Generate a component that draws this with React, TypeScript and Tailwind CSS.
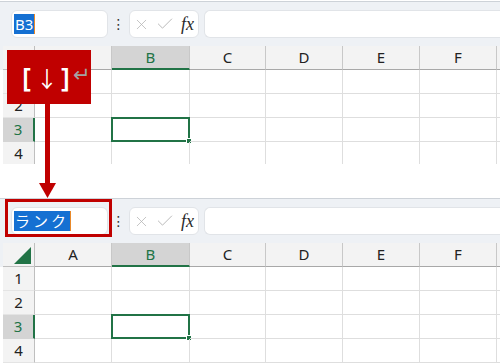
import { X, Check } from 'lucide-react'

const cols = [
  { label: 'A', w: 'w-[77px]' },
  { label: 'B', w: 'w-[78px]' },
  { label: 'C', w: 'w-[76px]' },
  { label: 'D', w: 'w-[77px]' },
  { label: 'E', w: 'w-[77px]' },
  { label: 'F', w: 'w-[77px]' },
]

const rows = [1, 2, 3, 4]

const NameBox = ({ text, jp }: { text: string; jp?: boolean }) => (
  <div className="w-[97px] h-[28px] bg-white rounded-md border border-[#e1e4e8] flex items-center pl-[2px]">
    <span
      className={
        'h-[20px] bg-[#1570d2] text-white leading-[20px] px-[1px] ' +
        (jp ? "text-[15px] tracking-[3px] font-['Noto_Sans_CJK_JP',sans-serif]" : "text-[15px] font-['Noto_Sans',sans-serif]")
      }
    >
      {text}
    </span>
    <span className="w-[1px] h-[20px] bg-[#e8892a]" />
  </div>
)

const Toolbar = ({ text, jp }: { text: string; jp?: boolean }) => (
  <div className="h-[45px] bg-[#eef1f5] border-t border-[#cdd2d8] flex items-start pt-[8px] pl-[11px]">
    <NameBox text={text} jp={jp} />
    <div className="w-[21px] h-[28px] flex items-center justify-center text-[#333] text-[14px] font-['DejaVu_Sans',sans-serif]">
      ⋮
    </div>
    <div className="w-[70px] h-[28px] bg-white rounded-md border border-[#e1e4e8] flex items-center pl-[3px] gap-[5px]">
      <X size={17} strokeWidth={1.1} className="text-[#b4b4b4]" />
      <Check size={20} strokeWidth={1.1} className="text-[#b4b4b4]" />
      <span className="text-[18px] italic text-[#2a2a2a] font-['Liberation_Serif',serif] ml-[1px]">fx</span>
    </div>
    <div className="ml-[5px] flex-1 h-[28px] bg-white rounded-l-md border border-r-0 border-[#e1e4e8]" />
  </div>
)

const Sheet = () => (
  <div className="font-['Noto_Sans',sans-serif]">
    <div className="flex h-[24px] bg-[#eef1f5]">
      <div className="w-[3px]" />
      <div className="w-[32px] bg-[#f3f3f3] border-r border-b border-[#bfbfbf] flex items-end justify-end pr-[3px] pb-[2px]">
        <svg width="17" height="17" viewBox="0 0 17 17">
          <polygon points="17,0 17,17 0,17" fill="#217346" />
        </svg>
      </div>
      {cols.map((c) => (
        <div
          key={c.label}
          className={
            c.w +
            ' flex items-center justify-center text-[15px] border-r ' +
            (c.label === 'B'
              ? 'bg-[#d4d4d4] text-[#217346] border-[#c8c8c8] border-b-2 border-b-[#217346]'
              : 'bg-[#f3f3f3] text-[#222] border-[#c8c8c8] border-b border-b-[#a8a8a8]')
          }
        >
          {c.label}
        </div>
      ))}
      <div className="flex-1 bg-[#f3f3f3] border-b border-[#a8a8a8]" />
    </div>
    {rows.map((r) => (
      <div key={r} className="flex h-[24px]">
        <div className="w-[3px]" />
        <div
          className={
            'w-[32px] flex items-center justify-center text-[15px] border-b ' +
            (r === 3
              ? 'bg-[#d4d4d4] text-[#217346] border-r-2 border-r-[#217346] border-b-[#d4d4d4]'
              : 'bg-[#f3f3f3] text-[#222] border-r border-r-[#bfbfbf] border-b-[#e4e4e4]')
          }
        >
          {r}
        </div>
        {cols.map((c) => (
          <div key={c.label} className={c.w + ' relative border-r border-b border-[#dedede]'}>
            {r === 3 && c.label === 'B' && (
              <div className="absolute -left-[1px] -top-[1px] -right-[1px] -bottom-[1px] border-2 border-[#217346]">
                <div className="absolute -right-[4px] -bottom-[4px] w-[6px] h-[6px] bg-[#217346] border border-white" />
              </div>
            )}
          </div>
        ))}
        <div className="flex-1 border-b border-[#dedede]" />
      </div>
    ))}
  </div>
)

export default function App() {
  return (
    <div className="relative w-[500px] h-[364px] bg-white overflow-hidden">
      <div className="mt-[1px] h-[163px] overflow-hidden">
        <Toolbar text="B3" />
        <Sheet />
      </div>
      <div className="h-[34px]" />
      <div className="relative h-[166px] overflow-hidden">
        <Toolbar text="ランク" jp />
        <Sheet />
        <div className="absolute left-[5px] top-[1px] w-[107px] h-[38px] border-[3px] border-[#c00000]" />
      </div>

      {/* key annotation */}
      <div className="absolute left-[7px] top-[50px] w-[84px] h-[54px] bg-[#c00000] flex items-center pl-[15px] text-white">
        <span className="w-[14px] h-[32px] text-[27px] leading-[32px] font-semibold font-['Noto_Sans',sans-serif]">[</span>
        <span className="w-[22px] h-[32px] text-[22px] leading-[32px] text-center font-['Noto_Sans_CJK_JP',sans-serif]">↓</span>
        <span className="w-[12px] h-[32px] text-[27px] leading-[32px] text-right font-semibold font-['Noto_Sans',sans-serif]">]</span>
        <span className="ml-[3px] w-[18px] h-[22px] -mt-[5px] text-[#a3a3a3] text-[21px] leading-[22px] font-['DejaVu_Sans',sans-serif]">↵</span>
      </div>
      <div className="absolute left-[45px] top-[104px] w-[5px] h-[80px] bg-[#c00000]" />
      <svg className="absolute left-[39px] top-[183px]" width="17" height="15" viewBox="0 0 17 15">
        <polygon points="0,0 17,0 8.5,15" fill="#c00000" />
      </svg>
    </div>
  )
}
